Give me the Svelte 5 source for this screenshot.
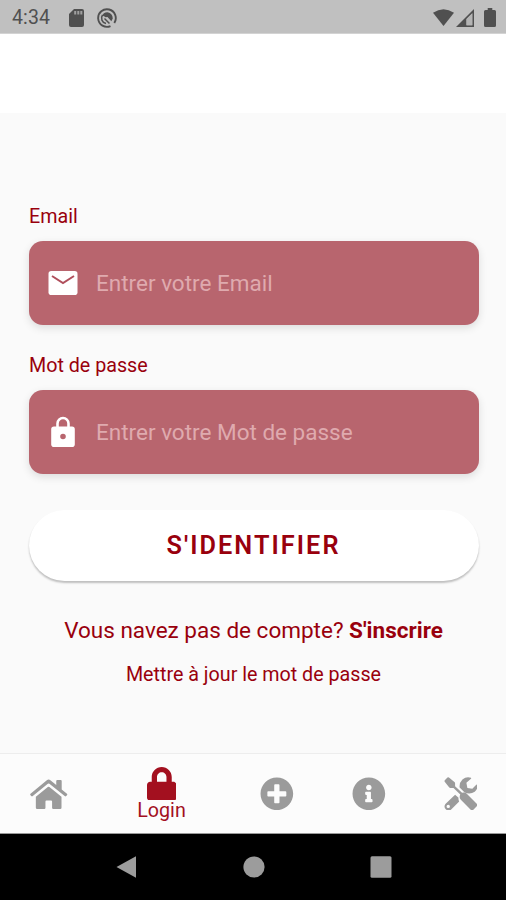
<script lang="ts">
    type Field = {
        id: string;
        type: string;
        label: string;
        placeholder: string;
    };

    const fields: Field[] = [
        {
            id: "email",
            type: "email",
            label: "Email",
            placeholder: "Entrer votre Email",
        },
        {
            id: "password",
            type: "password",
            label: "Mot de passe",
            placeholder: "Entrer votre Mot de passe",
        },
    ];

    // Solid glyphs, each drawn at 24dp
    const tabs = [
        {
            name: "home",
            box: "0 0 38 34",
            path: "M17 3.300Q18.800 1.800 20.600 3.300L26.500 8V4Q26.500 3 27.500 3H31Q32 3 32 4V12.500L37.300 16.800Q38 17.500 37.300 18.300L36.500 19.300Q35.800 20 35 19.300L19.600 6.900Q18.800 6.300 18 6.900L2.800 19.300Q2 20 1.300 19.300L.5 18.300Q-.2 17.500.5 16.800zM18 10.200Q18.800 9.600 19.600 10.200L31.800 20V31Q31.800 32.300 30.500 32.300H23.500Q22.300 32.300 22.300 31V24.800Q22.300 23.800 21.300 23.800H16.600Q15.600 23.800 15.600 24.800V31Q15.600 32.300 14.400 32.300H7.200Q5.900 32.300 5.900 31V20z",
        },
        {
            name: "login",
            box: "0 0 448 512",
            path: "M400 224h-24v-72C376 68.2 307.8 0 224 0S72 68.2 72 152v72H48c-26.5 0-48 21.5-48 48v192c0 26.5 21.5 48 48 48h352c26.5 0 48-21.5 48-48V272c0-26.5-21.5-48-48-48zm-104 0H152v-72c0-39.7 32.3-72 72-72s72 32.3 72 72v72z",
        },
        {
            name: "add",
            box: "0 0 512 512",
            path: "M256 8C119 8 8 119 8 256s111 248 248 248 248-111 248-248S393 8 256 8zm144 276c0 6.600-5.400 12-12 12h-92v92c0 6.600-5.400 12-12 12h-56c-6.600 0-12-5.400-12-12v-92h-92c-6.600 0-12-5.400-12-12v-56c0-6.600 5.400-12 12-12h92v-92c0-6.600 5.400-12 12-12h56c6.600 0 12 5.400 12 12v92h92c6.600 0 12 5.400 12 12v56z",
        },
        {
            name: "info",
            box: "0 0 512 512",
            path: "M256 8C119.043 8 8 119.083 8 256c0 136.997 111.043 248 248 248s248-111.003 248-248C504 119.083 392.957 8 256 8zm0 110c23.196 0 42 18.804 42 42s-18.804 42-42 42-42-18.804-42-42 18.804-42 42-42zm56 254c0 6.627-5.373 12-12 12h-88c-6.627 0-12-5.373-12-12v-24c0-6.627 5.373-12 12-12h12v-64h-12c-6.627 0-12-5.373-12-12v-24c0-6.627 5.373-12 12-12h64c6.627 0 12 5.373 12 12v100h12c6.627 0 12 5.373 12 12v24z",
        },
        {
            name: "tools",
            box: "0 0 34 34",
            path: "M3.500.5Q4.300 0 5 .6L10.500 5Q11.200 5.500 11.200 6.500V9.300L18.200 16Q21 15 23 17L33.400 27.300Q34.300 28.300 33.400 29.300L29.300 33.400Q28.300 34.300 27.300 33.400L17 23Q15 21 16.400 17.600L9.600 11H6.500Q5.600 11 5.100 10.300L.7 4.800Q.2 4 .8 3.300zM27.300.8Q22.500-.8 18.600 2.600Q15.200 6 15.800 10.600L20.600 15.300Q26.200 18.200 31 14.800Q34.600 11.800 33.600 7.800L32.800 7.600L28.600 11.900L23.600 11L22.600 5.900L27.500 1.600zM11.200 17.800L1.400 27.200A4.100 4.100 0 0 0 7 33L15.300 24.700Q14.300 22.500 14.700 21zM4.300 28A1.700 1.700 0 1 1 4.300 31.400A1.700 1.700 0 1 1 4.300 28z",
        },
    ];

    let active = $state("login");
</script>

<div class="phone">
    <div class="status-bar">
        <span class="clock">4:34</span>
        <svg class="sd" viewBox="0 0 15 18">
            <path d="M5 0h8a2 2 0 0 1 2 2v14a2 2 0 0 1-2 2H2a2 2 0 0 1-2-2V5z" />
            <path class="cut" d="M5.200 2h2v3.500h-2zM8.300 2h2v3.500h-2zM11.300 2h2v3.500h-2z" />
        </svg>
        <svg class="debug" viewBox="0 0 20 20">
            <path class="ring" d="M13.500 18.100A8.800 8.800 0 1 1 17.300 14.900" />
            <path class="ring thin" d="M9 15.600A5.700 5.700 0 0 1 5.500 6.800" />
            <path d="M4.600 8.500Q6.500 4 10.500 4.200Q15.500 5 15.800 10.500L14.300 13.200L10.500 9L8.500 9.200L6.800 8z" />
            <path class="ring thin" d="M7.500 10.500L12.500 15.500" />
        </svg>
        <div class="signals">
            <svg class="wifi" viewBox="0 0 21 17">
                <path d="M0 3.700Q10.500-3.300 21 3.700L10.500 17z" />
            </svg>
            <svg class="cell" viewBox="0 0 18 18">
                <path d="M0 18L18 0v18zM10.500 10v6.300h5.800V4.200z" fill-rule="evenodd" />
                <path class="faint" d="M10.500 10v6.300h5.800V4.200z" />
            </svg>
            <svg class="battery" viewBox="0 0 12 19">
                <path d="M3.700 0h4.600v2H10.500A1.500 1.500 0 0 1 12 3.500v14a1.500 1.500 0 0 1-1.500 1.500h-9A1.500 1.500 0 0 1 0 17.500v-14A1.500 1.500 0 0 1 1.500 2h2.200z" />
            </svg>
        </div>
    </div>

    <header class="app-bar"></header>

    <main class="content">
        <form onsubmit={(e) => e.preventDefault()}>
            {#each fields as field}
                <label for={field.id}>{field.label}</label>
                <div class="input-box">
                    {#if field.id === "email"}
                        <svg class="field-icon" viewBox="0 0 34 34">
                            <rect x="2.500" y="5" width="29" height="24" rx="2.800" />
                            <path class="line" d="M6 10l11 7 11-7" />
                        </svg>
                    {:else}
                        <svg class="field-icon" viewBox="0 0 34 34">
                            <path
                                fill-rule="evenodd"
                                d="M8 11.500h2.200V8.500a6.800 6.800 0 0 1 13.600 0v3H26a2.800 2.800 0 0 1 2.800 2.800v14.900a2.800 2.800 0 0 1-2.800 2.800H8a2.800 2.800 0 0 1-2.800-2.800V14.300A2.800 2.800 0 0 1 8 11.500zM12.800 11.500h8.400V8.500a4.200 4.200 0 0 0-8.400 0zM17 18.700a2.800 2.800 0 1 0 0 5.600a2.800 2.800 0 0 0 0-5.600z"
                            />
                        </svg>
                    {/if}
                    <input
                        id={field.id}
                        type={field.type}
                        placeholder={field.placeholder}
                    />
                </div>
            {/each}
            <button class="submit" type="submit">S'IDENTIFIER</button>
        </form>

        <p class="signup">Vous navez pas de compte? <b>S'inscrire</b></p>
        <p class="reset">Mettre à jour le mot de passe</p>
    </main>

    <nav class="tab-bar">
        {#each tabs as tab}
            <button
                class="tab"
                class:active={active === tab.name}
                aria-label={tab.name}
                onclick={() => (active = tab.name)}
            >
                <svg viewBox={tab.box}><path d={tab.path} /></svg>
                {#if active === tab.name}
                    <span>Login</span>
                {/if}
            </button>
        {/each}
    </nav>

    <div class="system-nav">
        <svg viewBox="0 0 24 24"><path d="M1.500 12L21 1.200v21.600z" /></svg>
        <svg viewBox="0 0 24 24"><circle cx="12" cy="12" r="10.600" /></svg>
        <svg viewBox="0 0 24 24"><rect x="1.500" y="1.200" width="21" height="21.600" rx="1.500" /></svg>
    </div>
</div>

<style>
    :global(body) {
        margin: 0;
        overflow: hidden;
        background: #fafafa;
    }

    .phone {
        width: 506px;
        height: 900px;
        display: flex;
        flex-direction: column;
        background: #fafafa;
        font-family: Roboto, "Liberation Sans", sans-serif;
        color: #99000d;
    }

    svg {
        display: block;
        fill: currentColor;
    }

    button {
        border: none;
        font-family: inherit;
        color: inherit;
        padding: 0;
    }

    /* Android status bar */
    .status-bar {
        box-sizing: border-box;
        height: 34px;
        padding: 2px 10px 0 12px;
        display: flex;
        align-items: center;
        background: #c0c0c0;
        border-bottom: 1px solid #d3d3d3;
        color: #505050;
    }

    .clock {
        width: 57px;
        font-size: 19.5px;
        letter-spacing: 0.1px;
    }

    .sd {
        width: 15px;
        height: 18px;
    }

    .cut {
        fill: #a0a0a0;
    }

    .debug {
        width: 20px;
        height: 20px;
        margin-left: 13px;
    }

    .ring {
        fill: none;
        stroke: currentColor;
        stroke-width: 1.9;
    }

    .thin {
        stroke-width: 1.5;
    }

    .signals {
        margin-left: auto;
        display: flex;
        align-items: center;
    }

    .wifi {
        width: 21px;
        height: 17px;
    }

    .cell {
        width: 18px;
        height: 18px;
        margin: 0 10px 0 2px;
    }

    .faint {
        fill: #b4b4b4;
    }

    .battery {
        width: 12px;
        height: 19px;
    }

    .app-bar {
        height: 79px;
        background: #fff;
    }

    .content {
        flex: 1;
        padding: 92px 27.5px 0 28.5px;
    }

    label {
        display: block;
        height: 24px;
        line-height: 24px;
        margin-bottom: 12px;
        padding-left: 0.5px;
        font-size: 19.7px;
    }

    .input-box {
        height: 84px;
        margin-bottom: 29px;
        padding-left: 17px;
        display: flex;
        align-items: center;
        border-radius: 14px;
        background: #b8656e;
        box-shadow: 0 3px 9px rgba(0, 0, 0, 0.12);
    }

    .field-icon {
        width: 34px;
        height: 34px;
        color: #fff;
    }

    .line {
        fill: none;
        stroke: #b04f5c;
        stroke-width: 2;
    }

    input {
        flex: 1;
        min-width: 0;
        margin-left: 16.5px;
        padding: 0;
        border: none;
        outline: none;
        background: none;
        font-family: inherit;
        font-size: 22.5px;
        color: #fff;
    }

    input::placeholder {
        color: #dfaaae;
        opacity: 1;
    }

    .submit {
        display: block;
        width: 450px;
        height: 71px;
        margin-top: 36px;
        border-radius: 36px;
        background: #fff;
        box-shadow: 0 2px 2px rgba(0, 0, 0, 0.24);
        font-size: 25.3px;
        font-weight: 600;
        letter-spacing: 2.05px;
    }

    p {
        margin: 0;
        text-align: center;
        white-space: nowrap;
    }

    .signup {
        margin-top: 35px;
        line-height: 28px;
        font-size: 22.5px;
    }

    .reset {
        margin-top: 19px;
        line-height: 24px;
        font-size: 19.7px;
    }

    /* Bottom tabs */
    .tab-bar {
        box-sizing: border-box;
        height: 81px;
        padding-left: 3px;
        display: grid;
        grid-template-columns: 92px 136px 92px 92px 91px;
        border-top: 1px solid #ededed;
        border-bottom: 1px solid #999;
        background: #fcfcfc;
    }

    .tab {
        display: flex;
        flex-direction: column;
        align-items: center;
        justify-content: center;
        background: none;
        color: #9b9b9b;
    }

    .tab svg {
        height: 33.7px;
    }

    .tab.active {
        padding-right: 3px;
        color: #a3101f;
    }

    .tab span {
        margin-bottom: -1px;
        padding-top: 1px;
        font-size: 19.7px;
        line-height: 20px;
    }

    .system-nav {
        height: 66px;
        display: flex;
        justify-content: center;
        align-items: center;
        gap: 103px;
        padding-left: 1px;
        background: #000;
        color: #9c9c9c;
    }

    .system-nav svg {
        width: 24px;
        height: 24px;
    }
</style>
